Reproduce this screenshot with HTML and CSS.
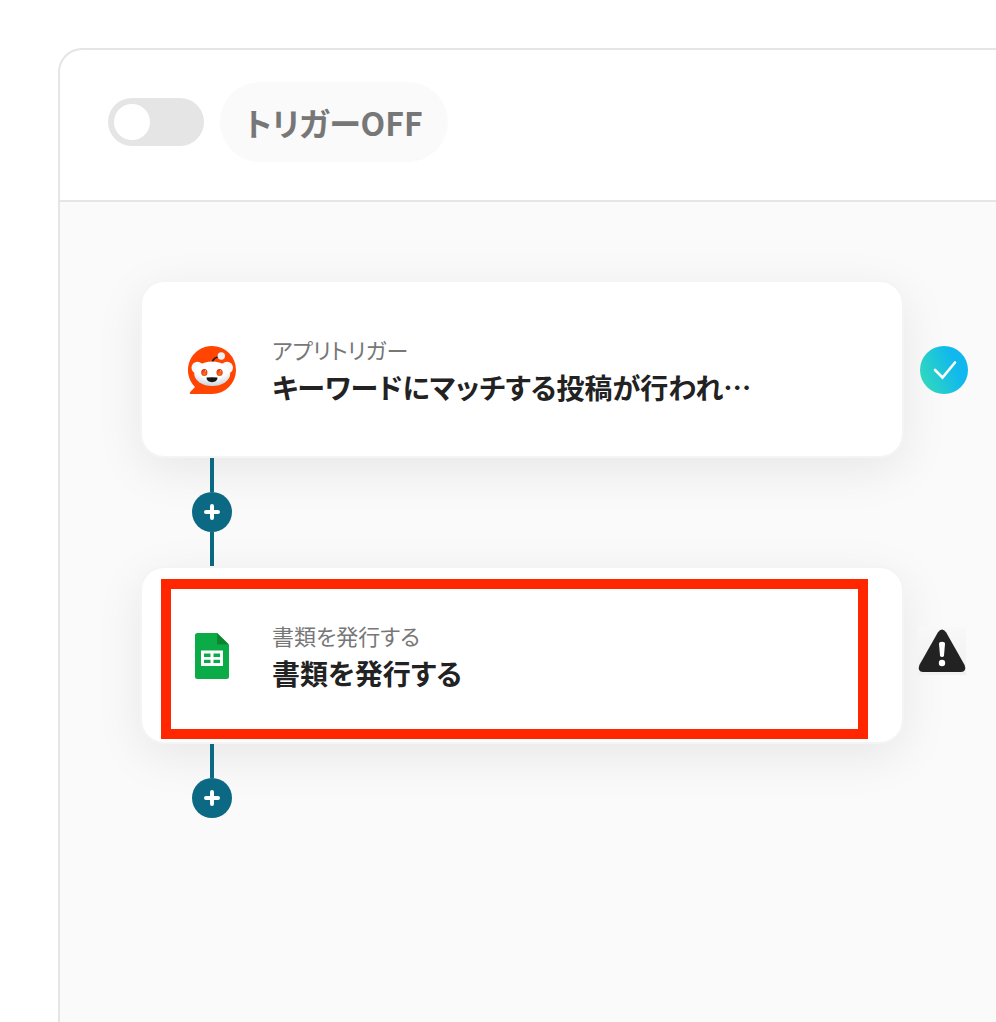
FILE: index.html
```html
<!DOCTYPE html>
<html lang="ja">
<head>
    <meta charset="UTF-8" />
    <title>フロー編集</title>
    <link rel="stylesheet" href="styles.css">
</head>
<body>
    <main class="panel">
        <header class="panel-header">
            <input type="checkbox" class="toggle" id="trigger">
            <label class="toggle-label" for="trigger">トリガーOFF</label>
        </header>
        <div class="flow">
            <div class="step">
                <div class="card">
                    <svg class="card-icon" viewBox="0 0 48 48">
                        <defs>
                            <radialGradient id="face" cx="50%" cy="20%" r="80%">
                                <stop offset="0.6" stop-color="#ffffff" />
                                <stop offset="1" stop-color="#c5d5dc" />
                            </radialGradient>
                            <radialGradient id="eye" cx="50%" cy="65%" r="60%">
                                <stop offset="0" stop-color="#ff7a1c" />
                                <stop offset="1" stop-color="#d92b08" />
                            </radialGradient>
                        </defs>
                        <path d="M24 0A24 24 0 1 1 24 48H3C1.700 48 1.400 46.800 2.200 46L7 41A24 24 0 0 1 24 0Z" fill="#ff4500" />
                        <circle cx="9.500" cy="21.800" r="6" fill="#f5f9fa" />
                        <circle cx="39" cy="21.800" r="6" fill="#f5f9fa" />
                        <path d="M24 17C24.700 13.500 27.500 11 31.500 11" fill="none" stroke="#161616" stroke-width="1.700" />
                        <circle cx="33.300" cy="10" r="3.700" fill="#e9f1f4" />
                        <ellipse cx="24.200" cy="27.800" rx="18" ry="12.200" fill="url(#face)" />
                        <ellipse cx="16.300" cy="26.500" rx="3.100" ry="3.500" fill="url(#eye)" />
                        <ellipse cx="31.600" cy="26.500" rx="3.100" ry="3.500" fill="url(#eye)" />
                        <circle cx="17.500" cy="24.900" r="0.700" fill="#ffd0b0" />
                        <circle cx="32.800" cy="24.900" r="0.700" fill="#ffd0b0" />
                        <path d="M18.500 31.500Q24 30.800 29.500 31.500C29.500 34.400 27 36.200 24 36.200S18.500 34.400 18.500 31.500Z" fill="#161616" />
                    </svg>
                    <div class="card-text">
                        <p class="card-sub">アプリトリガー</p>
                        <h2 class="card-title">キーワードにマッチする投稿が行われ…</h2>
                    </div>
                </div>
                <svg class="status" viewBox="0 0 48 48">
                    <defs>
                        <linearGradient id="done" x1="0" y1="0.700" x2="1" y2="0.300">
                            <stop offset="0" stop-color="#31d9bd" />
                            <stop offset="0.750" stop-color="#10b8ee" />
                        </linearGradient>
                    </defs>
                    <circle cx="24" cy="24" r="24" fill="url(#done)" />
                    <path d="M15 24L22.500 31.500L35 16.500" fill="none" stroke="#fff" stroke-width="2.600" stroke-linecap="round" />
                </svg>
            </div>
            <div class="connector">
                <span class="line"></span>
                <button class="add" aria-label="追加">
                    <svg viewBox="0 0 16 16"><path d="M8 2V14M2 8H14" stroke="#fff" stroke-width="4" stroke-linecap="round" /></svg>
                </button>
                <span class="line"></span>
            </div>
            <div class="step">
                <div class="card">
                    <svg class="card-icon" viewBox="0 0 48 48">
                        <path d="M9.500 1H29L41 13V44.500Q41 47 38.500 47H9.500Q7 47 7 44.500V3.500Q7 1 9.500 1Z" fill="#0bac48" />
                        <path d="M29 1L41 12.500H29Z" fill="#08872f" />
                        <path fill="#fff" fill-rule="evenodd" d="M13 18.500H35V34H13ZM16 21.500V25H22.500V21.500ZM25.500 21.500V25H32V21.500ZM16 27.800V31H22.500V27.800ZM25.500 27.800V31H32V27.800Z" />
                    </svg>
                    <div class="card-text">
                        <p class="card-sub">書類を発行する</p>
                        <h2 class="card-title">書類を発行する</h2>
                    </div>
                    <div class="highlight"></div>
                </div>
                <svg class="status" viewBox="0 0 48 48">
                    <defs>
                        <linearGradient id="backing" x1="0" y1="0" x2="0" y2="1">
                            <stop offset="0" stop-color="#f8f8f8" />
                            <stop offset="1" stop-color="#f1f1f1" />
                        </linearGradient>
                    </defs>
                    <rect x="-2" y="-5" width="48" height="48" fill="url(#backing)" />
                    <path d="M17.800 0.500Q22 -5.500 26.200 0.500L44.600 33Q47 39.500 41 40H3Q-3 39.500 -0.600 33Z" fill="#222" />
                    <path d="M19 12Q19 9.800 22 9.800T25 12L24 23.500Q23.700 25 22 25T20 23.500Z" fill="#fff" />
                    <circle cx="22" cy="31" r="3.200" fill="#fff" />
                </svg>
            </div>
            <div class="connector">
                <span class="line"></span>
                <button class="add" aria-label="追加">
                    <svg viewBox="0 0 16 16"><path d="M8 2V14M2 8H14" stroke="#fff" stroke-width="4" stroke-linecap="round" /></svg>
                </button>
            </div>
        </div>
    </main>
</body>
</html>
```
FILE: styles.css
```css
* {
    box-sizing: border-box;
}

body {
    margin: 0;
    padding: 48px 0 0 58px;
    min-height: 100vh;
    display: flex;
    background-color: white;
    font-family: "Noto Sans CJK JP", "Noto Sans", sans-serif;
    font-feature-settings: "palt";
    color: #222;
}

.panel {
    flex: 1;
    min-width: 0;
    display: flex;
    flex-direction: column;
    border: 2px solid #e5e5e5;
    border-right: none;
    border-bottom: none;
    border-top-left-radius: 24px;
    overflow: hidden;
}

.panel-header {
    display: flex;
    align-items: center;
    gap: 16px;
    padding: 32px 48px 38px;
    border-bottom: 2px solid #e5e5e5;
}

.toggle {
    appearance: none;
    width: 96px;
    height: 48px;
    margin: 0;
    padding: 6px;
    border-radius: 24px;
    background-color: #e5e5e5;
    cursor: pointer;
}

.toggle::before {
    content: "";
    display: block;
    width: 36px;
    height: 36px;
    border-radius: 50%;
    background-color: white;
}

.toggle-label {
    padding: 16px 25px;
    border-radius: 40px;
    background-color: #fafafa;
    color: #777;
    font-size: 32px;
    font-weight: bold;
    line-height: 48px;
}

.flow {
    flex: 1;
    padding: 78px 28px 48px 80px;
    background-color: #fafafa;
}

.step {
    display: flex;
    align-items: center;
    gap: 16px;
}

.card {
    position: relative;
    flex: 1;
    min-width: 0;
    display: flex;
    align-items: center;
    gap: 36px;
    padding: 50px 46px 48px;
    border: 2px solid #f4f4f4;
    border-radius: 24px;
    background-color: white;
    background-clip: padding-box;
    box-shadow: 0 12px 48px rgba(0, 0, 0, 0.08);
}

.card-icon {
    flex: none;
    width: 48px;
    height: 48px;
}

.card-text {
    min-width: 0;
}

.card-sub {
    margin: 0;
    color: #777;
    font-size: 22px;
    line-height: 34px;
}

.card-title {
    margin: 0;
    font-size: 28px;
    font-weight: bold;
    line-height: 42px;
    white-space: nowrap;
    overflow: hidden;
    text-overflow: ellipsis;
}

.status {
    position: relative;
    flex: none;
    width: 48px;
    height: 48px;
    margin-top: 2px;
    overflow: visible;
}

.connector {
    position: relative;
    width: 40px;
    margin-left: 52px;
    display: flex;
    flex-direction: column;
    align-items: center;
}

.line {
    width: 4px;
    height: 34px;
    background-color: #0b6984;
}

.add {
    display: flex;
    align-items: center;
    justify-content: center;
    width: 40px;
    height: 40px;
    padding: 0;
    border: none;
    border-radius: 50%;
    background-color: #0b6984;
    cursor: pointer;
}

.add svg {
    width: 16px;
    height: 16px;
}

/* frame drawn over the selected card */
.highlight {
    position: absolute;
    inset: 11px 34px 3px 19px;
    border: 10px solid #ff2600;
}
```
